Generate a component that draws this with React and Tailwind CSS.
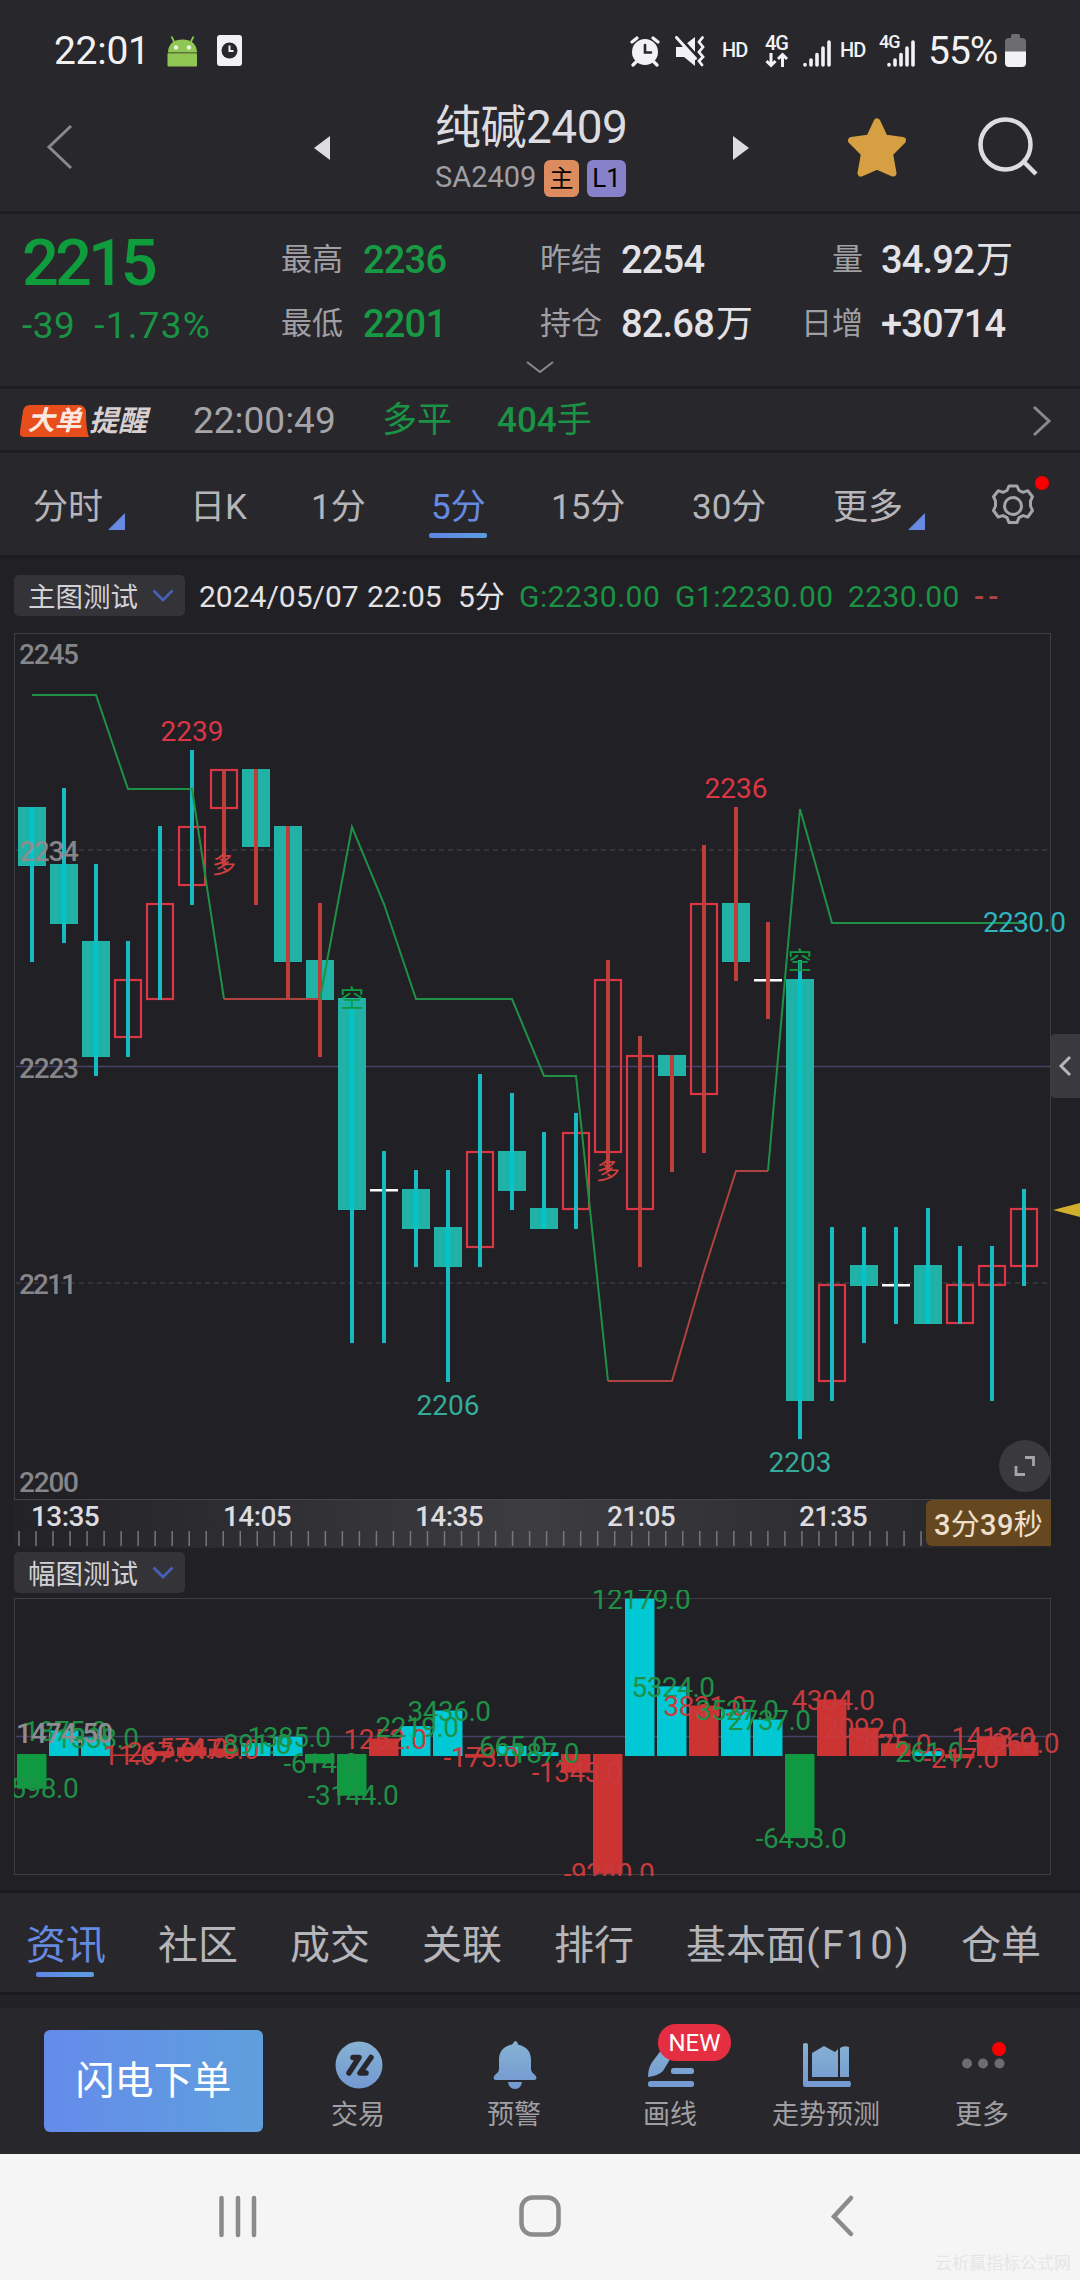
import { Fragment } from 'react';

const FONT = "font-['Roboto','Noto_Sans_CJK_SC',sans-serif]";

const TEAL = '#20b2a6';
const CYAN = '#00c8d4';
const WICK_UP = '#19b9c3';
const WICK_RED = '#bc3f3c';
const RED = '#dc3545';
const BAR_RED = '#cc3333';
const LABEL_RED = '#c83a3c';
const GREEN = '#0f9a41';
const LINE_GREEN = '#1f9146';
const LINE_RED = '#b04340';

// type: d = filled, u = hollow, x = doji
const CANDLES = [
  { t: 'd', top: 2236, bottom: 2233, high: 2236, low: 2228 },
  { t: 'd', top: 2233, bottom: 2230, high: 2237, low: 2229 },
  { t: 'd', top: 2229, bottom: 2223, high: 2233, low: 2222 },
  { t: 'u', top: 2227, bottom: 2224, high: 2229, low: 2223 },
  { t: 'u', top: 2231, bottom: 2226, high: 2235, low: 2226 },
  { t: 'u', top: 2235, bottom: 2232, high: 2239, low: 2231 },
  { t: 'u', top: 2238, bottom: 2236, high: 2238, low: 2233, red: true },
  { t: 'd', top: 2238, bottom: 2234, high: 2238, low: 2231, red: true },
  { t: 'd', top: 2235, bottom: 2228, high: 2235, low: 2226, red: true },
  { t: 'd', top: 2228, bottom: 2226, high: 2231, low: 2223, red: true },
  { t: 'd', top: 2226, bottom: 2215, high: 2226, low: 2208 },
  { t: 'x', top: 2216, bottom: 2216, high: 2218, low: 2208 },
  { t: 'd', top: 2216, bottom: 2214, high: 2217, low: 2212 },
  { t: 'd', top: 2214, bottom: 2212, high: 2217, low: 2206 },
  { t: 'u', top: 2218, bottom: 2213, high: 2222, low: 2212 },
  { t: 'd', top: 2218, bottom: 2216, high: 2221, low: 2215 },
  { t: 'd', top: 2215, bottom: 2214, high: 2219, low: 2214 },
  { t: 'u', top: 2219, bottom: 2215, high: 2220, low: 2214 },
  { t: 'u', top: 2227, bottom: 2218, high: 2228, low: 2217, red: true },
  { t: 'u', top: 2223, bottom: 2215, high: 2224, low: 2212, red: true },
  { t: 'd', top: 2223, bottom: 2222, high: 2223, low: 2217, red: true },
  { t: 'u', top: 2231, bottom: 2221, high: 2234, low: 2218, red: true },
  { t: 'd', top: 2231, bottom: 2228, high: 2236, low: 2227, red: true },
  { t: 'x', top: 2227, bottom: 2227, high: 2230, low: 2225, red: true },
  { t: 'd', top: 2227, bottom: 2205, high: 2228, low: 2203 },
  { t: 'u', top: 2211, bottom: 2206, high: 2214, low: 2205 },
  { t: 'd', top: 2212, bottom: 2211, high: 2214, low: 2208 },
  { t: 'x', top: 2211, bottom: 2211, high: 2214, low: 2209 },
  { t: 'd', top: 2212, bottom: 2209, high: 2215, low: 2209 },
  { t: 'u', top: 2211, bottom: 2209, high: 2213, low: 2209 },
  { t: 'u', top: 2212, bottom: 2211, high: 2213, low: 2205 },
  { t: 'u', top: 2215, bottom: 2212, high: 2216, low: 2211 },
];

// [value, bar colour, label colour]
const BARS = [
  [-2598, GREEN, LINE_GREEN],
  [1875, CYAN, LINE_GREEN],
  [1338, CYAN, LINE_GREEN],
  [11, BAR_RED, LABEL_RED],
  [267, BAR_RED, LABEL_RED],
  [574, BAR_RED, LABEL_RED],
  [470, BAR_RED, LABEL_RED],
  [891, CYAN, LINE_GREEN],
  [1385, CYAN, LINE_GREEN],
  [-614, GREEN, LINE_GREEN],
  [-3144, GREEN, LINE_GREEN],
  [1252, BAR_RED, LABEL_RED],
  [2219, CYAN, LINE_GREEN],
  [3436, CYAN, LINE_GREEN],
  [-173, BAR_RED, LABEL_RED],
  [665, CYAN, LINE_GREEN],
  [187, CYAN, LINE_GREEN],
  [-1343, BAR_RED, LABEL_RED],
  [-9240, BAR_RED, LABEL_RED],
  [12179, CYAN, LINE_GREEN],
  [5324, CYAN, LINE_GREEN],
  [3831, BAR_RED, LABEL_RED],
  [3527, CYAN, LINE_GREEN],
  [2737, CYAN, LINE_GREEN],
  [-6453, GREEN, LINE_GREEN],
  [4304, BAR_RED, LABEL_RED],
  [2092, BAR_RED, LABEL_RED],
  [875, BAR_RED, LABEL_RED],
  [261, CYAN, LINE_GREEN],
  [-217, BAR_RED, LABEL_RED],
  [1413, BAR_RED, LABEL_RED],
  [962, BAR_RED, LABEL_RED],
];

const xAt = (i) => 32 + i * 32;
const yAt = (price) => Math.round(118 + (2239 - price) * 19.08);
const barY = (value) => 165 - value * 0.0128;

function Signal() {
  return (
    <svg className="h-[27px] w-[28px]" viewBox="0 0 28 27" stroke="#f2f2f5" strokeWidth="3.6" strokeLinecap="round">
      <path d="M2 24.6V25M8 20V25M14 14.5V25M20 8V25M26 2V25" />
    </svg>
  );
}

function StatusBar() {
  return (
    <div className="flex h-[100px] items-start pl-[54px] pt-[34px] text-[#f2f2f5]">
      <span className="w-[113px] text-[39px] leading-[34px] tracking-[-0.3px]">22:01</span>
      <svg className="mt-[1px] h-[32px] w-[31px]" viewBox="0 0 31 32">
        <path d="M4.5 1.5l3 6M26.5 1.5l-3 6" stroke="#8dbf50" strokeWidth="1.8" />
        <path d="M1 17.5C1 9 7 4.5 15.5 4.5S30 9 30 17.5z" fill="#90c653" />
        <rect x="0.5" y="18.3" width="29.5" height="13.2" rx="1" fill="#90c653" />
        <circle cx="9" cy="12.5" r="2.2" fill="#e8f5dc" />
        <circle cx="22" cy="12.5" r="2.2" fill="#e8f5dc" />
      </svg>
      <svg className="ml-[19px] mt-[1px] h-[31px] w-[25px]" viewBox="0 0 25 31">
        <rect width="25" height="31" rx="3" fill="#f2f2f5" />
        <circle cx="12.5" cy="15.5" r="8" fill="#28272b" />
        <path d="M12.5 10.5v5.5h4" stroke="#f2f2f5" strokeWidth="2" fill="none" />
      </svg>

      <svg className="ml-[388px] mt-[2px] h-[31px] w-[30px]" viewBox="0 0 30 31" fill="none" strokeLinecap="round">
        <circle cx="15" cy="16" r="13" fill="#f2f2f5" />
        <path d="M2 6l5-4M28 6l-5-4M6 26l-3 3M24 26l3 3" stroke="#f2f2f5" strokeWidth="3.2" />
        <path d="M15 9v7.5h6" stroke="#28272b" strokeWidth="2.6" />
      </svg>
      <svg className="ml-[15px] mt-[2px] h-[31px] w-[30px]" viewBox="0 0 30 31" fill="none">
        <path d="M1 11h6L20 1v29L9 21H1z" fill="#f2f2f5" />
        <path d="M3 0l20 22" stroke="#28272b" strokeWidth="4" />
        <path d="M1.5 1.5l19 21" stroke="#f2f2f5" strokeWidth="3" strokeLinecap="round" />
        <path d="M27.5 1.5l-3.500 4.500 4 5-4 5 4 5-4 4 3 4" stroke="#f2f2f5" strokeWidth="2.8" strokeLinecap="round" />
      </svg>
      <span className="ml-[17px] mt-[6px] w-[43px] text-[20px] font-medium leading-[20px] tracking-[-1px]">HD</span>
      <div className="w-[38px]">
        <div className="text-[20px] font-medium leading-[18px] tracking-[-1px]">4G</div>
        <svg className="h-[16px] w-[24px]" viewBox="0 0 24 16" fill="none" stroke="#f2f2f5" strokeWidth="3">
          <path d="M6 1v12M1.5 9L6 13.5 10.5 9M17.5 15V3M13 7l4.500-4.500L22 7" />
        </svg>
      </div>
      <div className="mt-[6px] h-[27px] w-[37px]">
        <Signal />
      </div>
      <span className="mt-[6px] w-[39px] text-[20px] font-medium leading-[20px] tracking-[-1px]">HD</span>
      <div className="relative h-[34px] w-[49px]">
        <div className="text-[18px] font-medium leading-[16px] tracking-[-1px]">4G</div>
        <div className="absolute left-[8px] top-[6px]">
          <Signal />
        </div>
      </div>
      <span className="w-[77px] text-[39px] leading-[34px] tracking-[-1px]">55%</span>
      <svg className="h-[33px] w-[21px]" viewBox="0 0 21 33">
        <path d="M6 4V1.5Q6 0 7.5 0h6Q15 0 15 1.5V4h2q4 0 4 4v10H0V8q0-4 4-4z" fill="#6d6c71" />
        <path d="M0 17.5h21V29q0 4-4 4H4q-4 0-4-4z" fill="#f2f2f5" />
      </svg>
    </div>
  );
}

function Header() {
  return (
    <div className="flex h-[111px] items-start">
      <svg className="ml-[46px] mt-[24px] h-[46px] w-[28px]" viewBox="0 0 28 46" fill="none" stroke="#89888c" strokeWidth="3">
        <path d="M25 2L3 23l22 21" />
      </svg>
      <svg className="ml-[240px] mt-[36px] h-[24px] w-[16px]" viewBox="0 0 16 24" fill="#dddce0">
        <path d="M16 0v24L0 12z" />
      </svg>
      <div className="ml-[105px] w-[298px]">
        <div className="text-[46px] leading-[54px] tracking-[-0.5px] text-[#dddce0]">纯碱2409</div>
        <div className="mt-[6px] flex h-[37px] items-center">
          <span className="-mt-[3px] w-[109px] text-[29px] leading-[34px] text-[#a09fa4]">SA2409</span>
          <span className="flex h-[37px] w-[35px] items-center justify-center rounded-[6px] bg-[#dc8c5e] text-[24px] text-black">主</span>
          <span className="ml-[8px] flex h-[37px] w-[39px] items-center justify-center rounded-[6px] bg-[#8681c8] text-[26px] text-black">L1</span>
        </div>
      </div>
      <svg className="mt-[36px] h-[24px] w-[16px]" viewBox="0 0 16 24" fill="#dddce0">
        <path d="M0 0v24l16-12z" />
      </svg>
      <svg className="ml-[97px] mt-[17px] h-[62px] w-[62px]" viewBox="0 0 62 62">
        <path
          d="M31 5l7.500 16 18 2.500-13 13L47 56 31 49 15 56l3.500-19.500-13-13 18-2.500z"
          fill="#d69f42"
          stroke="#d69f42"
          strokeWidth="7"
          strokeLinejoin="round"
        />
      </svg>
      <svg className="ml-[69px] mt-[16px] h-[62px] w-[62px]" viewBox="0 0 62 62" fill="none" stroke="#dddce0" strokeWidth="4.5">
        <circle cx="28.5" cy="28.5" r="25" />
        <path d="M46 45l13 13" />
      </svg>
    </div>
  );
}

function Quote() {
  const cols = [
    { w: 'w-[259px]', rows: [['最高', '2236'], ['最低', '2201']], label: 'w-[82px]', color: 'text-[#179a43]' },
    { w: 'w-[260px]', rows: [['昨结', '2254'], ['持仓', '82.68万']], label: 'w-[81px]', color: 'text-[#e3e2e6]' },
    { w: 'w-[240px]', rows: [['量', '34.92万'], ['日增', '+30714']], label: 'w-[63px] mr-[18px] text-right', color: 'text-[#e3e2e6]' },
  ];
  return (
    <div className="relative flex h-[172px] items-start">
      <div className="w-[281px] pl-[22px] pt-[16px]">
        <div className="h-[66px] text-[65px] font-medium leading-[66px] tracking-[-4px] text-[#0f9c3d]">2215</div>
        <div className="mt-[9px] whitespace-nowrap text-[37px] leading-[42px] tracking-[0.5px] text-[#1a9345]">
          <span className="mr-[19px]">-39</span>
          <span className="tracking-[1.2px]">-1.73%</span>
        </div>
      </div>
      {cols.map((col) => (
        <div key={col.label} className={`${col.w} pt-[14px]`}>
          {col.rows.map(([label, value]) => (
            <div key={label} className="flex h-[64px] items-center">
              <span className={`${col.label} shrink-0 whitespace-nowrap text-[31px]/[44px] text-[#a09fa4]`}>{label}</span>
              <span className={`${col.color} whitespace-nowrap text-[38px] font-medium leading-[44px] tracking-[-0.8px]`}>
                {value.replace('万', '')}
                {value.includes('万') && <span className="ml-[2px] text-[37px] font-normal">万</span>}
              </span>
            </div>
          ))}
        </div>
      ))}
      <svg className="absolute left-[525px] top-[147px] h-[14px] w-[30px]" viewBox="0 0 30 14" fill="none" stroke="#89888c" strokeWidth="2">
        <path d="M2 1l13 10L28 1" />
      </svg>
    </div>
  );
}

function BigOrder() {
  return (
    <div className="flex h-[61px] items-center pt-[2px]">
      <div className="relative ml-[20px] flex h-[32px] w-[69px] items-center justify-center">
        <svg className="absolute left-0 top-0 h-[32px] w-[69px]" viewBox="0 0 69 32" fill="#e84e1c">
          <path d="M10 0H58q8 0 8 8 0 16 3 24H4q-5 0-4-6L3 6q1-6 7-6z" />
        </svg>
        <span className="relative text-[27px] font-bold italic leading-[32px] text-[#fbe9e0]">大单</span>
      </div>
      <span className="w-[104px] text-[29px] font-bold italic leading-[32px] text-[#d8cfcf]">提醒</span>
      <span className="w-[189px] text-[37px] leading-[44px] text-[#a5a4a9]">22:00:49</span>
      <span className="w-[115px] text-[35px] leading-[44px] text-[#1a9345]">多平</span>
      <span className="w-[535px] text-[35px] leading-[44px] text-[#1a9345]">
        <span className="font-medium">404</span>手
      </span>
      <svg className="h-[32px] w-[20px]" viewBox="0 0 20 32" fill="none" stroke="#89888c" strokeWidth="3">
        <path d="M2 2l15 14L2 30" />
      </svg>
    </div>
  );
}

const PERIODS = [
  { label: '分时', w: 'w-[157px]', arrow: true },
  { label: '日K', w: 'w-[121px]' },
  { label: '1分', w: 'w-[120px]' },
  { label: '5分', w: 'w-[120px]', active: true },
  { label: '15分', w: 'w-[141px]' },
  { label: '30分', w: 'w-[141px]' },
  { label: '更多', w: 'w-[157px]', arrow: true },
];

function Periods() {
  return (
    <div className="flex h-[102px] items-center pl-[33px] text-[35px] text-[#b6b5ba]">
      {PERIODS.map((p) => (
        <div key={p.label} className={`${p.w} relative flex h-[102px] items-center`}>
          <span className={p.active ? 'pt-[8px] text-[#668ae2]' : 'pt-[8px]'}>{p.label}</span>
          {p.arrow && (
            <svg className="ml-[5px] mt-[35px] h-[17px] w-[17px]" viewBox="0 0 17 17" fill="#668ae2">
              <path d="M17 0v17H0z" />
            </svg>
          )}
          {p.active && (
            <span className="absolute -left-[2px] top-[80px] h-[5px] w-[58px] rounded-[2px] bg-linear-to-r from-[#5f84e6] to-[#5b9edf]" />
          )}
        </div>
      ))}
      <div className="relative mt-[3px] h-[46px] w-[46px]">
        <svg className="h-[46px] w-[46px]" viewBox="0 0 46 46" fill="none" stroke="#a5a4a9" strokeWidth="3">
          <path
            d="M19 3h8l2 4.500 4 1.800 4.800-1.600 4.700 6-2 4.300v5l2 4.500-4.700 6.500-4.800-1.400-4 2-2 5h-8l-2-5-4-2-4.800 1.400-4.700-6.500 2-4.500v-5l-2-4.300 4.700-6L13 9.300l4-1.800z"
            strokeLinejoin="round"
          />
          <circle cx="23" cy="23" r="8.5" />
        </svg>
        <span className="absolute left-[45px] top-[-7px] h-[14px] w-[14px] rounded-full bg-[#fb0000]" />
      </div>
    </div>
  );
}

function Picker({ label }) {
  return (
    <div className="ml-[14px] flex h-[41px] w-[171px] shrink-0 items-center rounded-[5px] bg-[#343338] pl-[14px] text-[27.5px] leading-[38px] text-[#d2d1d6]">
      <span className="w-[124px] pt-[4px]">{label}</span>
      <svg className="h-[13px] w-[22px]" viewBox="0 0 22 13" fill="none" stroke="#4660b8" strokeWidth="2.8">
        <path d="M1.5 1.5L11 11l9.500-9.500" />
      </svg>
    </div>
  );
}

function MainInfo() {
  return (
    <div className="flex h-[75px] items-start pt-[17px]">
      <Picker label="主图测试" />
      <div className="flex h-[41px] items-center whitespace-nowrap pl-[14px] pt-[3px] text-[30px] leading-[40px] text-[#e3e2e6]">
        <span className="w-[168px]">2024/05/07</span>
        <span className="w-[91px]">22:05</span>
        <span className="w-[61px]">5分</span>
        <span className="w-[156px] tracking-[0.5px] text-[#1a9345]">G:2230.00</span>
        <span className="w-[173px] tracking-[0.5px] text-[#1a9345]">G1:2230.00</span>
        <span className="w-[126px] tracking-[0.4px] text-[#1a9345]">2230.00</span>
        <span className="font-medium tracking-[4px] text-[#b34245]">--</span>
      </div>
    </div>
  );
}

function MainChart() {
  return (
    <div className="relative h-[866px]">
      <svg className="h-[866px] w-[1080px]" viewBox="0 0 1080 866" fontSize="28">
        <rect x="14.5" y="0.5" width="1036" height="866" fill="none" stroke="#3f3e43" />
        <path d="M16 217H1050M16 650H1050" stroke="#3b3a41" strokeWidth="1.5" strokeDasharray="5 4" />
        <path d="M16 433.5H1050" stroke="#434168" strokeWidth="1.5" />

        {CANDLES.map((c, i) => {
          const x = xAt(i);
          const top = yAt(c.top);
          const bottom = yAt(c.bottom);
          return (
            <Fragment key={i}>
              {c.t === 'd' && <rect x={x - 14} y={top - 1} width="28" height={bottom - top + 2} fill={TEAL} />}
              {c.t === 'u' && (
                <rect x={x - 13} y={top} width="26" height={bottom - top} fill="none" stroke={RED} strokeWidth="2.2" />
              )}
              {c.t === 'x' && <rect x={x - 14} y={top - 1} width="28" height="2.5" fill="#fff" />}
              <rect
                x={x - 2}
                y={yAt(c.high) - 1}
                width="4"
                height={yAt(c.low) - yAt(c.high) + 2}
                fill={c.red ? WICK_RED : WICK_UP}
              />
              {c.t === 'd' && !c.red && <rect x={x - 2} y={top - 1} width="4" height={bottom - top + 2} fill="#00c5cb" />}
            </Fragment>
          );
        })}

        <g fill="none" strokeWidth="2">
          <path d="M32 62H96L128 156H192L224 366" stroke={LINE_GREEN} />
          <path d="M224 366H320" stroke={LINE_RED} />
          <path d="M320 366L352 194 384 271 416 366H512L544 443H576L608 748" stroke={LINE_GREEN} />
          <path d="M608 748H672L704 638 736 538H768" stroke={LINE_RED} />
          <path d="M768 538L800 176 832 290H1024" stroke={LINE_GREEN} />
        </g>

        <g fontSize="24" textAnchor="middle">
          <text x="224" y="240" fill="#d0403f">多</text>
          <text x="608" y="546" fill="#d0403f">多</text>
          <text x="352" y="374" fill={GREEN}>空</text>
          <text x="800" y="336" fill={GREEN}>空</text>
        </g>
        <g textAnchor="middle">
          <text x="192" y="108" fill={RED}>2239</text>
          <text x="736" y="165" fill={RED}>2236</text>
          <text x="448" y="782" fill="#34ab9b">2206</text>
          <text x="800" y="839" fill="#34ab9b">2203</text>
        </g>
        <text x="983" y="299" fill="#2eb5c0" textLength="83">2230.0</text>

        <g fill="#8d8c90" fontWeight="500" fillOpacity="0.95">
          <text x="19" y="31" textLength="60">2245</text>
          <text x="19" y="228" textLength="60">2234</text>
          <text x="19" y="445" textLength="60">2223</text>
          <text x="19" y="661" textLength="58">2211</text>
          <text x="19" y="859" textLength="60">2200</text>
        </g>
        <path d="M1053 577l27-7v14z" fill="#d3b02c" />
      </svg>

      <div className="absolute right-0 top-[401px] flex h-[64px] w-[29px] items-center justify-center rounded-l-[4px] bg-[#3a393e] pr-[1px]">
        <svg className="h-[22px] w-[14px]" viewBox="0 0 14 22" fill="none" stroke="#b6b5ba" strokeWidth="3">
          <path d="M12 2L3 11l9 9" />
        </svg>
      </div>
      <div className="absolute left-[999px] top-[807px] flex h-[52px] w-[52px] items-center justify-center rounded-full bg-[#3a393e]">
        <svg className="h-[22px] w-[22px]" viewBox="0 0 22 22" fill="none" stroke="#a5a4a9" strokeWidth="2.8">
          <path d="M11 2.5h8.500V11M2 11v8.500h9" />
        </svg>
      </div>
    </div>
  );
}

function TimeAxis() {
  return (
    <div className="relative ml-[14px] h-[49px] w-[1037px] border-t border-[#444348] bg-linear-to-r from-[#232226] via-[#3d3c41] to-[#232226]">
      <div className="flex pl-[17px] pt-[1px] text-[28px] font-medium leading-[32px] tracking-[-0.6px] text-[#dddce0]">
        {['13:35', '14:05', '14:35', '21:05', '21:35'].map((t) => (
          <span key={t} className="w-[192px]">{t}</span>
        ))}
      </div>
      <svg className="absolute left-0 top-[31px] h-[16px] w-[1037px]" viewBox="0 0 1037 16" stroke="#77767b" strokeWidth="1.5">
        {Array.from({ length: 61 }, (_, i) => (
          <path key={i} d={`M${5 + i * 17.02} 0V15`} />
        ))}
      </svg>
      <div className="absolute right-0 top-0 flex h-[46px] w-[125px] items-center justify-center rounded-l-[6px] bg-[#664820] pt-[5px] text-[29px] tracking-[0.3px] text-[#eee0cf]">
        <span className="font-medium">3</span>分<span className="font-medium">39</span>秒
      </div>
    </div>
  );
}

function SubChart() {
  return (
    <svg className="h-[300px] w-[1080px]" viewBox="0 0 1080 300" fontSize="28">
      <defs>
        <clipPath id="sub">
          <rect x="14" y="-10" width="1066" height="296" />
        </clipPath>
      </defs>
      <rect x="14.5" y="8.5" width="1036" height="276" fill="none" stroke="#3f3e43" />
      <path d="M16 146.5H1050" stroke="#434168" strokeWidth="1.5" />
      <g clipPath="url(#sub)">
        {BARS.map(([value, color], i) => {
          const y = barY(value);
          return value > 0 ? (
            <rect key={i} x={xAt(i) - 15} y={y - 0.5} width="29.5" height={166.5 - y} fill={color} />
          ) : (
            <rect key={i} x={xAt(i) - 15} y="164" width="29.5" height={y - 163.5} fill={color} />
          );
        })}
        {BARS.map(([value, , color], i) => (
          <text key={i} x={xAt(i) + 1} y={barY(value) + 10} fill={color} textAnchor="middle" letterSpacing="-0.5">
            {value.toFixed(1)}
          </text>
        ))}
        <text x="16" y="153" fill="#8d8c90" fontWeight="500" textLength="97">1474.50</text>
      </g>
    </svg>
  );
}

const TABS = [
  { label: '资讯', w: 'w-[132px]', active: true },
  { label: '社区', w: 'w-[132px]' },
  { label: '成交', w: 'w-[132px]' },
  { label: '关联', w: 'w-[132px]' },
  { label: '排行', w: 'w-[132px]' },
  { label: '基本面(F10)', w: 'w-[275px]' },
  { label: '仓单', w: 'w-[82px]' },
];

function InfoTabs() {
  return (
    <div className="flex h-[99px] items-center bg-[#28272b] pl-[26px] text-[40px] text-[#b6b5ba]">
      {TABS.map((t) => (
        <div key={t.label} className={`${t.w} relative flex h-[98px] shrink-0 items-center whitespace-nowrap pt-[7px]`}>
          <span className={t.active ? 'text-[#668ae2]' : ''}>
            {t.label.replace('(F10)', '')}
            {t.label.includes('(F10)') && <span className="tracking-[2px]">(F10)</span>}
          </span>
          {t.active && (
            <span className="absolute left-[10px] top-[78px] h-[5px] w-[58px] rounded-[2px] bg-linear-to-r from-[#5f84e6] to-[#5b9edf]" />
          )}
        </div>
      ))}
    </div>
  );
}

function TradeIcon() {
  return (
    <svg className="h-[48px] w-[48px]" viewBox="0 0 48 48">
      <circle cx="24" cy="24" r="23.5" fill="url(#ico)" />
      <path
        d="M18 16.500H24L14 32M36 16.500L25 32H31"
        stroke="#28272b"
        strokeWidth="5.5"
        fill="none"
        strokeLinejoin="round"
        strokeLinecap="round"
      />
    </svg>
  );
}

function BellIcon() {
  return (
    <svg className="h-[48px] w-[48px]" viewBox="0 0 48 48" fill="url(#ico)">
      <path d="M24 0q2.500 0 3 3.500C36 5.500 40 11 40 19v9q0 3 3 5 2.500 2 2.500 4 0 2-2.500 2H5q-2.500 0-2.500-2 0-2 2.500-4 3-2 3-5v-9C8 11 12 5.500 21 3.500 21.500 0 24 0z" />
      <path d="M17 41h14q-1 7-7 7t-7-7z" />
    </svg>
  );
}

function DrawIcon() {
  return (
    <svg className="h-[48px] w-[48px]" viewBox="0 0 48 48" fill="url(#ico)">
      <path d="M1 36q0-10 5-16L18 4l10 6-12 20q-5 5-15 6z" />
      <rect x="24" y="27" width="23" height="6" rx="2.5" />
      <rect x="1" y="40" width="46" height="6" rx="2.5" />
    </svg>
  );
}

function TrendIcon() {
  return (
    <svg className="h-[48px] w-[48px]" viewBox="0 0 48 48" fill="url(#ico)">
      <path d="M0 3q2-2 5 0v37h42q2 3 0 6H2q-2 0-2-2z" />
      <path d="M9 36V12l12-7 11 6 3-3v28z" />
      <path d="M37 36V7q4-3 9-1v30z" />
    </svg>
  );
}

function MoreIcon() {
  return (
    <svg className="h-[48px] w-[48px]" viewBox="0 0 48 48" fill="#6d6c71">
      <circle cx="8" cy="22.5" r="5" />
      <circle cx="24" cy="22.5" r="5" />
      <circle cx="40.5" cy="22.5" r="5" />
    </svg>
  );
}

const ACTIONS = [
  { label: '交易', Icon: TradeIcon },
  { label: '预警', Icon: BellIcon },
  { label: '画线', Icon: DrawIcon, badge: true },
  { label: '走势预测', Icon: TrendIcon },
  { label: '更多', Icon: MoreIcon, dot: true },
];

function BottomBar() {
  return (
    <div className="flex h-[146px] items-start bg-[#28272b]">
      <svg className="absolute h-0 w-0">
        <defs>
          <linearGradient id="ico" x1="0" y1="0" x2="0" y2="48" gradientUnits="userSpaceOnUse">
            <stop offset="0" stopColor="#86b2d2" />
            <stop offset="1" stopColor="#7398d2" />
          </linearGradient>
        </defs>
      </svg>
      <div className="ml-[44px] mt-[22px] flex h-[102px] w-[219px] items-center justify-center rounded-[6px] bg-linear-to-r from-[#648beb] to-[#5f9fdd] text-[39px] text-white">
        闪电下单
      </div>
      <div className="ml-[18px] flex">
        {ACTIONS.map(({ label, Icon, badge, dot }) => (
          <div key={label} className="relative flex w-[156px] flex-col items-center pt-[33px]">
            <Icon />
            <span className="mt-[8px] pr-[2px] text-[27px] leading-[36px] text-[#a09fa4]">{label}</span>
            {badge && (
              <span className="absolute left-[65px] top-[16px] flex h-[37px] w-[73px] items-center justify-center rounded-[18px] bg-[#e62e43] text-[24px] text-white">
                NEW
              </span>
            )}
            {dot && <span className="absolute left-[87px] top-[34px] h-[14px] w-[14px] rounded-full bg-[#fb0000]" />}
          </div>
        ))}
      </div>
    </div>
  );
}

function SystemNav() {
  return (
    <div className="relative flex h-[126px] items-start bg-[#f5f5f6] pt-[40px]">
      <svg className="ml-[218px] h-[44px] w-[40px]" viewBox="0 0 40 44" stroke="#8b8b8b" strokeWidth="4.5" strokeLinecap="round">
        <path d="M3.5 4v37M20 4v37M36 4v37" />
      </svg>
      <svg className="ml-[260px] h-[44px] w-[44px]" viewBox="0 0 44 44" fill="none" stroke="#8b8b8b" strokeWidth="4.5">
        <rect x="3.5" y="3.5" width="37" height="37" rx="11" />
      </svg>
      <svg className="ml-[267px] h-[44px] w-[28px]" viewBox="0 0 28 44" fill="none" stroke="#8b8b8b" strokeWidth="4.5" strokeLinecap="round">
        <path d="M22 4L5 22.5 22 40" />
      </svg>
      <span className="absolute bottom-[6px] right-[9px] text-[17px] leading-[22px] text-[#e6e6e7]">云析赢指标公式网</span>
    </div>
  );
}

export default function App() {
  return (
    <div className={`${FONT} flex h-[2280px] w-[1080px] flex-col overflow-hidden bg-[#28272b]`}>
      <StatusBar />
      <Header />
      <div className="h-[3px] bg-[#1d1c20]" />
      <Quote />
      <div className="h-[3px] bg-[#1d1c20]" />
      <BigOrder />
      <div className="h-[3px] bg-[#1d1c20]" />
      <Periods />
      <div className="h-[3px] bg-[#1d1c20]" />
      <div className="h-[1332px] bg-[#212024]">
        <MainInfo />
        <MainChart />
        <TimeAxis />
        <div className="-mb-[3px] flex h-[45px] items-end">
          <Picker label="幅图测试" />
        </div>
        <SubChart />
      </div>
      <div className="h-[3px] shrink-0 bg-[#1b1a1e]" />
      <InfoTabs />
      <div className="h-[3px] shrink-0 bg-[#1b1a1e]" />
      <div className="h-[13px] shrink-0 bg-[#222125]" />
      <BottomBar />
      <SystemNav />
    </div>
  );
}
